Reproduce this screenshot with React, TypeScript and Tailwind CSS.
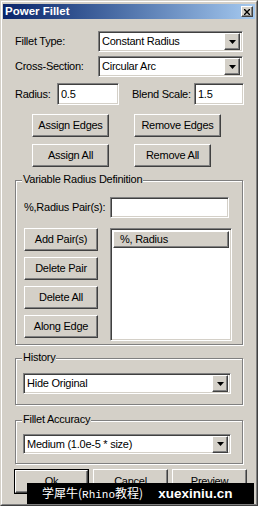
import React from "react";

const raised =
  "border border-t-white border-l-white border-r-[#404040] border-b-[#404040] shadow-[inset_-1px_-1px_0_#808080,inset_1px_1px_0_#D4D0C8] bg-[#D4D0C8]";
const sunken =
  "border border-t-[#808080] border-l-[#808080] border-r-white border-b-white shadow-[inset_1px_1px_0_#404040,inset_-1px_-1px_0_#D4D0C8] bg-white";

function Btn({ label, w, h = 23, className = "" }: { label: string; w: number; h?: number; className?: string }) {
  return (
    <div
      className={`${raised} flex items-center justify-center shrink-0 ${className}`}
      style={{ width: w, height: h }}
    >
      <span className="leading-none">{label}</span>
    </div>
  );
}

function Arrow() {
  return (
    <div className={`${raised} w-[16px] h-[17px] flex items-center justify-center shrink-0`}>
      <svg width="7" height="4" viewBox="0 0 7 4">
        <path d="M0 0H7L3.5 4Z" fill="#000" />
      </svg>
    </div>
  );
}

function Combo({ text, w, h = 21 }: { text: string; w: number; h?: number }) {
  return (
    <div className={`${sunken} flex items-center pl-[3px] pr-[2px] shrink-0`} style={{ width: w, height: h }}>
      <span className="flex-1 leading-none">{text}</span>
      <Arrow />
    </div>
  );
}

function Input({ text, w, h = 21 }: { text: string; w: number; h?: number }) {
  return (
    <div className={`${sunken} flex items-center pl-[3px] shrink-0`} style={{ width: w, height: h }}>
      <span className="leading-none">{text}</span>
    </div>
  );
}

function Group({
  title,
  h,
  className = "",
  children,
}: {
  title: string;
  h: number;
  className?: string;
  children?: React.ReactNode;
}) {
  return (
    <div
      className={`relative w-[228px] shrink-0 border border-[#808080] shadow-[1px_1px_0_white,inset_1px_1px_0_white] ${className}`}
      style={{ height: h }}
    >
      <span className="absolute left-[6px] -top-[7px] bg-[#D4D0C8] px-[1px] leading-none">{title}</span>
      {children}
    </div>
  );
}

export default function App() {
  return (
    <div className="w-[258px] h-[506px] bg-[#D4D0C8] relative overflow-hidden whitespace-nowrap text-[11px] tracking-[-0.25px] text-black font-['Liberation_Sans',Arial,sans-serif] border border-t-[#D4D0C8] border-l-[#D4D0C8] border-r-[#404040] border-b-[#404040]">
      <div className="h-full border border-t-white border-l-white border-r-[#808080] border-b-[#808080] p-[1px] flex flex-col">
        {/* Title bar */}
        <div className="h-[15px] mt-[1px] shrink-0 flex items-center justify-between bg-gradient-to-r from-[#0A246A] to-[#A6CAF0] pl-[2px] pr-[2px]">
          <span className="text-white font-bold text-[11.5px] tracking-normal leading-none">Power Fillet</span>
          <div className={`${raised} w-[12px] h-[11px] flex items-center justify-center`}>
            <svg width="6" height="6" viewBox="0 0 6 6">
              <path d="M0 0L6 6M6 0L0 6" stroke="#000" strokeWidth="1.4" />
            </svg>
          </div>
        </div>

        {/* Fillet type */}
        <div className="flex items-center h-[21px] mt-[12px] pl-[12px] shrink-0">
          <span className="w-[83px] shrink-0">Fillet Type:</span>
          <Combo text="Constant Radius" w={145} />
        </div>
        <div className="flex items-center h-[21px] mt-[4px] pl-[12px] shrink-0">
          <span className="w-[83px] shrink-0">Cross-Section:</span>
          <Combo text="Circular Arc" w={145} />
        </div>
        <div className="flex items-center h-[22px] mt-[6px] pl-[12px] shrink-0">
          <span className="w-[42px] shrink-0">Radius:</span>
          <Input text="0.5" w={62} h={22} />
          <span className="w-[75px] shrink-0 pl-[13px]">Blend Scale:</span>
          <Input text="1.5" w={50} h={22} />
        </div>

        <div className="flex mt-[9px] pl-[29px] gap-[25px] shrink-0">
          <Btn label="Assign Edges" w={77} />
          <Btn label="Remove Edges" w={87} />
        </div>
        <div className="flex mt-[7px] pl-[29px] gap-[25px] shrink-0">
          <Btn label="Assign All" w={77} />
          <Btn label="Remove All" w={77} />
        </div>

        {/* Variable radius */}
        <Group title="Variable Radius Definition" h={165} className="ml-[12px] mt-[13px]">
          <div className="flex items-center mt-[16px] pl-[8px]">
            <span className="w-[86px] shrink-0">%,Radius Pair(s):</span>
            <Input text="" w={119} />
          </div>
          <div className="flex mt-[10px] pl-[8px]">
            <div className="flex flex-col gap-[6px] w-[86px]">
              <Btn label="Add Pair(s)" w={74} />
              <Btn label="Delete Pair" w={74} />
              <Btn label="Delete All" w={74} />
              <Btn label="Along Edge" w={74} />
            </div>
            <div className={`${sunken} w-[122px] h-[113px] p-[2px]`}>
              <div className={`${raised} h-[17px] flex items-center pl-[6px]`}>
                <span className="leading-none">%, Radius</span>
              </div>
            </div>
          </div>
        </Group>

        {/* History */}
        <Group title="History" h={47} className="ml-[12px] mt-[13px]">
          <div className="mt-[14px] pl-[7px]">
            <Combo text="Hide Original" w={208} />
          </div>
        </Group>

        {/* Accuracy */}
        <Group title="Fillet Accuracy" h={44} className="ml-[12px] mt-[15px]">
          <div className="mt-[13px] pl-[7px]">
            <Combo text="Medium (1.0e-5 * size)" w={208} h={20} />
          </div>
        </Group>

        <div className="flex mt-[5px] pl-[11px] gap-[4px] shrink-0">
          <div className="border border-black w-[75px] h-[25px] shrink-0">
            <Btn label="Ok" w={73} h={23} />
          </div>
          <Btn label="Cancel" w={75} h={25} />
          <Btn label="Preview" w={75} h={25} />
        </div>
      </div>

      {/* Watermark overlay */}
      <div className="absolute left-[26px] top-[482px] w-[227px] h-[21px] bg-black text-white flex items-center pl-[15px] leading-none tracking-normal">
        <span className="text-[12px] font-['Noto_Sans_CJK_SC',sans-serif]">学犀牛(<span className="font-['Liberation_Mono',monospace] text-[11px]">Rhino</span>教程)</span>
        <span className="ml-[15px] font-bold text-[13.5px] font-['Liberation_Sans',Arial,sans-serif]">xuexiniu.cn</span>
      </div>
    </div>
  );
}
